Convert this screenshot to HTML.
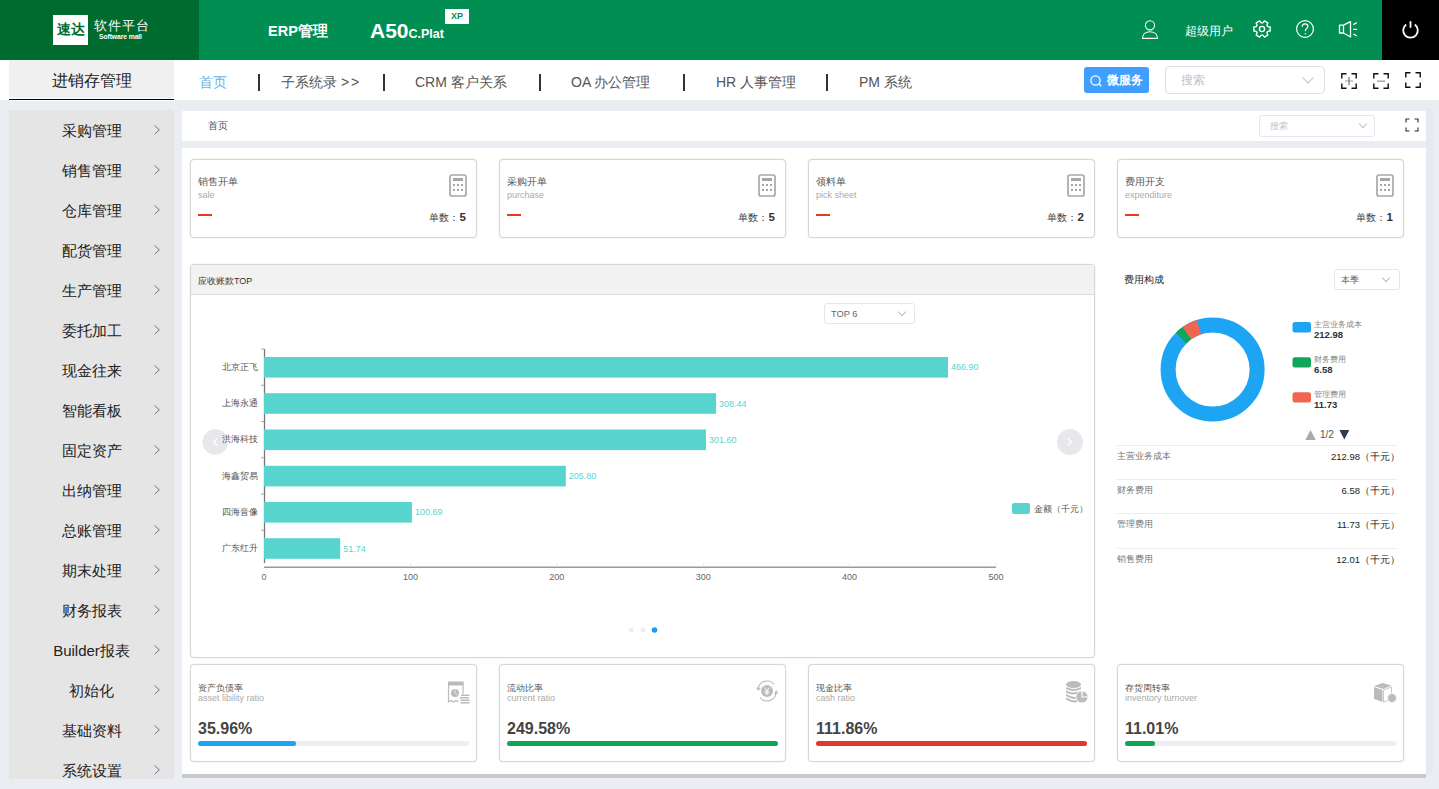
<!DOCTYPE html>
<html><head><meta charset="utf-8">
<style>
*{box-sizing:border-box;margin:0;padding:0}
html,body{width:1439px;height:789px;overflow:hidden;background:#eaedf1;font-family:"Liberation Sans",sans-serif;position:relative}
.a{position:absolute;white-space:nowrap}
#hdr{left:0;top:0;width:1439px;height:60px;background:#008e53}
#logo{left:0;top:0;width:199px;height:60px;background:#006b2f}
#nav2{left:0;top:60px;width:1439px;height:40px;background:#fff}
#side{left:9px;top:110px;width:165px;height:669px;background:#e5e5e5;overflow:hidden}
.si{position:absolute;left:0;width:165px;font-size:15px;color:#222;text-align:center;line-height:15px}
.si i{position:absolute;left:145px;top:2px;width:7px;height:10px;line-height:0}
.tab{font-size:14px;color:#555;top:75px;line-height:14px}
.sep{top:74px;width:2px;height:17px;background:#333}
.card{border:1px solid #d6d6d6;border-radius:4px;background:#fff;box-shadow:0 0 1.5px rgba(0,0,0,.14)}
.ct{font-size:10px;line-height:11px;color:#555}
.ct9{font-size:9px !important}
.cs{font-size:9px;line-height:11px;color:#aaa}
.lg{font-size:8px;line-height:10px;color:#888}
.lv{font-size:9.5px;line-height:11px;color:#333;font-weight:bold}
.tn{font-size:9px;line-height:11px;color:#777}
.tv{font-size:9.5px;line-height:11px;color:#222}
.bv{font-size:16px;line-height:19px;color:#444;font-weight:bold}
</style></head><body>
<div id="hdr" class="a"></div>
<div id="logo" class="a"></div>
<div class="a" style="left:53px;top:15px;width:35px;height:30px;background:#fff"></div>
<div class="a" style="left:57px;top:22px;font-size:13.8px;line-height:16px;font-weight:bold;color:#006b2f">速达</div>
<div class="a" style="left:94px;top:18.5px;font-size:12.7px;line-height:14px;color:#fff;letter-spacing:0.9px">软件平台</div>
<div class="a" style="left:99px;top:33px;font-size:6.8px;line-height:7px;color:#fff;font-weight:bold;letter-spacing:-0.1px">Software mall</div>

<div class="a" style="left:268px;top:23px;font-size:14.5px;line-height:16px;color:#fff;font-weight:bold">ERP管理</div>
<div class="a" style="left:370px;top:19.5px;font-size:21px;line-height:22px;color:#fff;font-weight:bold">A50<span style="font-size:12.5px">C.Plat</span></div>
<div class="a" style="left:445px;top:9px;width:24px;height:15px;background:#fff;color:#008e53;font-size:9px;font-weight:bold;text-align:center;line-height:15px">XP</div>

<!-- header right icons -->
<svg class="a" style="left:1140px;top:19px" width="20" height="22" viewBox="0 0 20 22" fill="none" stroke="#fff" stroke-width="1.1">
<circle cx="10" cy="6.3" r="4.6"/><path d="M2.5 19.4 C2.5 15 6 12.8 10 12.8 C14 12.8 17.5 15 17.5 19.4 Z"/></svg>
<div class="a" style="left:1185px;top:25px;font-size:12px;line-height:13px;color:#fff">超级用户</div>
<svg class="a" style="left:1252px;top:19.3px" width="20" height="20" viewBox="0 0 20 20" fill="none" stroke="#fff" stroke-width="1.4" stroke-linejoin="round"><path d="M12.32 1.93 L15.84 3.96 L14.89 6.18 L15.75 7.68 L18.15 7.97 L18.15 12.03 L15.75 12.32 L14.89 13.82 L15.84 16.04 L12.32 18.07 L10.86 16.14 L9.14 16.14 L7.68 18.07 L4.16 16.04 L5.11 13.82 L4.25 12.32 L1.85 12.03 L1.85 7.97 L4.25 7.68 L5.11 6.18 L4.16 3.96 L7.68 1.93 L9.14 3.86 L10.86 3.86Z"/><circle cx="10" cy="10" r="2.6"/></svg>
<svg class="a" style="left:1295px;top:19px" width="20" height="20" viewBox="0 0 20 20" fill="none" stroke="#fff" stroke-width="1.2">
<circle cx="10" cy="10" r="8.4"/><path d="M7.2 7.8 C7.2 5.9 8.5 4.9 10.1 4.9 C11.8 4.9 12.9 6 12.9 7.4 C12.9 9.3 10.3 9.7 10.3 12.2"/><circle cx="10.3" cy="14.7" r="0.7" fill="#fff" stroke="none"/></svg>
<svg class="a" style="left:1338px;top:20px" width="21" height="19" viewBox="0 0 21 19" fill="none" stroke="#fff" stroke-width="1.3" stroke-linejoin="round">
<path d="M1.5 5.2 H5.5 L12.5 1.6 V17 L5.5 13 H1.5 Z M5.5 5.2 V13"/><path d="M15.3 4.6 L18.8 2.6 M15.3 9.3 H19 M15.3 14 L18.8 16"/></svg>
<div class="a" style="left:1382px;top:0;width:57px;height:60px;background:#000"></div>
<svg class="a" style="left:1401px;top:20px" width="19" height="20" viewBox="0 0 19 20" fill="none" stroke="#fff" stroke-width="1.8">
<path d="M5.2 4.5 A7.3 7.3 0 1 0 13.8 4.5"/><path d="M9.5 1.2 V7.8"/></svg>

<!-- nav row 2 -->
<div id="nav2" class="a"></div>
<div class="a" style="left:9px;top:60px;width:165px;height:41px;background:#fff"></div><div class="a" style="left:9px;top:60px;width:165px;height:38px;background:#f0f0f0"></div><div class="a" style="left:9px;top:99px;width:165px;height:1px;background:#000"></div>
<div class="a" style="left:52px;top:73px;font-size:16px;line-height:16px;color:#222">进销存管理</div>
<div class="a tab" style="left:199px;color:#67b3ea">首页</div>
<div class="a sep" style="left:258px"></div>
<div class="a tab" style="left:281px">子系统录 &gt;<span style="margin-left:2px">&gt;</span></div>
<div class="a sep" style="left:383px"></div>
<div class="a tab" style="left:415px">CRM 客户关系</div>
<div class="a sep" style="left:539px"></div>
<div class="a tab" style="left:571px">OA 办公管理</div>
<div class="a sep" style="left:683px"></div>
<div class="a tab" style="left:716px">HR 人事管理</div>
<div class="a sep" style="left:826px"></div>
<div class="a tab" style="left:859px">PM 系统</div>

<div class="a" style="left:1084px;top:67px;width:65px;height:26px;background:#409eff;border-radius:3px"></div>
<svg class="a" style="left:1090px;top:75px" width="12" height="12" viewBox="0 0 12 12" fill="none" stroke="#fff" stroke-width="1.3"><circle cx="5.5" cy="5.5" r="4.6"/><path d="M9 9 L11.3 11.3"/></svg>
<div class="a" style="left:1107px;top:74px;font-size:12px;line-height:13px;color:#fff;font-weight:bold">微服务</div>
<div class="a" style="left:1165px;top:66px;width:160px;height:28px;border:1px solid #dcdfe6;border-radius:4px;background:#fff"></div>
<div class="a" style="left:1181px;top:74px;font-size:12px;line-height:13px;color:#c0c4cc">搜索</div>
<div class="a" style="left:1304px;top:74px;width:8px;height:8px;border-right:1px solid #c0c4cc;border-bottom:1px solid #c0c4cc;transform:rotate(45deg)"></div>


<svg class="a" style="left:1340px;top:72px" width="18" height="18" viewBox="0 0 18 18" fill="none" stroke="#111" stroke-width="1.4"><path d="M1.8 6.5V1.8H6.5M11.5 1.8H16.2V6.5M16.2 11.5V16.2H11.5M6.5 16.2H1.8V11.5"/><path d="M5 9H13" stroke="#aaa" stroke-width="1.2"/><path d="M9 5V13" stroke="#777" stroke-width="1.2"/></svg>
<svg class="a" style="left:1372px;top:72px" width="18" height="18" viewBox="0 0 18 18" fill="none" stroke="#111" stroke-width="1.4"><path d="M1.8 6.5V1.8H6.5M11.5 1.8H16.2V6.5M16.2 11.5V16.2H11.5M6.5 16.2H1.8V11.5"/><path d="M5 9.2H13" stroke="#aaa" stroke-width="1.5"/></svg>
<svg class="a" style="left:1404px;top:71px" width="18" height="18" viewBox="0 0 18 18" fill="none" stroke="#111" stroke-width="1.4"><path d="M1.8 6.5V1.8H6.5M11.5 1.8H16.2V6.5M16.2 11.5V16.2H11.5M6.5 16.2H1.8V11.5"/></svg>
<!-- sidebar -->
<div id="side" class="a">
<div class="si" style="top:13px">采购管理<i><svg width="7" height="10" viewBox="0 0 7 10"><path d="M0.6 0.5 L5.3 4.9 L0.6 9.3" fill="none" stroke="#5f6678" stroke-width="0.9"/></svg></i></div>
<div class="si" style="top:53px">销售管理<i><svg width="7" height="10" viewBox="0 0 7 10"><path d="M0.6 0.5 L5.3 4.9 L0.6 9.3" fill="none" stroke="#5f6678" stroke-width="0.9"/></svg></i></div>
<div class="si" style="top:93px">仓库管理<i><svg width="7" height="10" viewBox="0 0 7 10"><path d="M0.6 0.5 L5.3 4.9 L0.6 9.3" fill="none" stroke="#5f6678" stroke-width="0.9"/></svg></i></div>
<div class="si" style="top:133px">配货管理<i><svg width="7" height="10" viewBox="0 0 7 10"><path d="M0.6 0.5 L5.3 4.9 L0.6 9.3" fill="none" stroke="#5f6678" stroke-width="0.9"/></svg></i></div>
<div class="si" style="top:173px">生产管理<i><svg width="7" height="10" viewBox="0 0 7 10"><path d="M0.6 0.5 L5.3 4.9 L0.6 9.3" fill="none" stroke="#5f6678" stroke-width="0.9"/></svg></i></div>
<div class="si" style="top:213px">委托加工<i><svg width="7" height="10" viewBox="0 0 7 10"><path d="M0.6 0.5 L5.3 4.9 L0.6 9.3" fill="none" stroke="#5f6678" stroke-width="0.9"/></svg></i></div>
<div class="si" style="top:253px">现金往来<i><svg width="7" height="10" viewBox="0 0 7 10"><path d="M0.6 0.5 L5.3 4.9 L0.6 9.3" fill="none" stroke="#5f6678" stroke-width="0.9"/></svg></i></div>
<div class="si" style="top:293px">智能看板<i><svg width="7" height="10" viewBox="0 0 7 10"><path d="M0.6 0.5 L5.3 4.9 L0.6 9.3" fill="none" stroke="#5f6678" stroke-width="0.9"/></svg></i></div>
<div class="si" style="top:333px">固定资产<i><svg width="7" height="10" viewBox="0 0 7 10"><path d="M0.6 0.5 L5.3 4.9 L0.6 9.3" fill="none" stroke="#5f6678" stroke-width="0.9"/></svg></i></div>
<div class="si" style="top:373px">出纳管理<i><svg width="7" height="10" viewBox="0 0 7 10"><path d="M0.6 0.5 L5.3 4.9 L0.6 9.3" fill="none" stroke="#5f6678" stroke-width="0.9"/></svg></i></div>
<div class="si" style="top:413px">总账管理<i><svg width="7" height="10" viewBox="0 0 7 10"><path d="M0.6 0.5 L5.3 4.9 L0.6 9.3" fill="none" stroke="#5f6678" stroke-width="0.9"/></svg></i></div>
<div class="si" style="top:453px">期末处理<i><svg width="7" height="10" viewBox="0 0 7 10"><path d="M0.6 0.5 L5.3 4.9 L0.6 9.3" fill="none" stroke="#5f6678" stroke-width="0.9"/></svg></i></div>
<div class="si" style="top:493px">财务报表<i><svg width="7" height="10" viewBox="0 0 7 10"><path d="M0.6 0.5 L5.3 4.9 L0.6 9.3" fill="none" stroke="#5f6678" stroke-width="0.9"/></svg></i></div>
<div class="si" style="top:533px">Builder报表<i><svg width="7" height="10" viewBox="0 0 7 10"><path d="M0.6 0.5 L5.3 4.9 L0.6 9.3" fill="none" stroke="#5f6678" stroke-width="0.9"/></svg></i></div>
<div class="si" style="top:573px">初始化<i><svg width="7" height="10" viewBox="0 0 7 10"><path d="M0.6 0.5 L5.3 4.9 L0.6 9.3" fill="none" stroke="#5f6678" stroke-width="0.9"/></svg></i></div>
<div class="si" style="top:613px">基础资料<i><svg width="7" height="10" viewBox="0 0 7 10"><path d="M0.6 0.5 L5.3 4.9 L0.6 9.3" fill="none" stroke="#5f6678" stroke-width="0.9"/></svg></i></div>
<div class="si" style="top:653px">系统设置<i><svg width="7" height="10" viewBox="0 0 7 10"><path d="M0.6 0.5 L5.3 4.9 L0.6 9.3" fill="none" stroke="#5f6678" stroke-width="0.9"/></svg></i></div>
</div>


<!-- breadcrumb -->
<div class="a" style="left:182px;top:111px;width:1244px;height:30px;background:#fff"></div>
<div class="a" style="left:208px;top:120px;font-size:10px;line-height:11px;color:#555">首页</div>
<div class="a" style="left:1259px;top:115px;width:116px;height:22px;border:1px solid #e4e7ed;border-radius:3px;background:#fff"></div>
<div class="a" style="left:1270px;top:121px;font-size:9px;line-height:10px;color:#c0c4cc">搜索</div>
<div class="a" style="left:1360px;top:121px;width:6px;height:6px;border-right:1px solid #c0c4cc;border-bottom:1px solid #c0c4cc;transform:rotate(45deg)"></div>
<svg class="a" style="left:1405px;top:118px" width="14" height="14" viewBox="0 0 14 14" fill="none" stroke="#2a2a3a" stroke-width="1.1"><path d="M1 4.5V1H4.5M9.5 1H13V4.5M13 9.5V13H9.5M4.5 13H1V9.5"/></svg>

<!-- main white -->
<div class="a" style="left:182px;top:148px;width:1244px;height:626px;background:#fff"></div>
<div class="a" style="left:182px;top:774px;width:1244px;height:4px;background:#c9c9c9"></div>
<div class="a" style="left:1426px;top:108px;width:7px;height:666px;background:#e6e9ee"></div>
<div class="a card" style="left:190px;top:159px;width:287px;height:79px">
<div class="a ct" style="left:7px;top:16px">销售开单</div>
<div class="a cs" style="left:7px;top:30px">sale</div>
<div class="a" style="left:7px;top:54px;width:14px;height:2px;background:#e53a22"></div>
<svg class="a" style="left:258px;top:14px" width="18" height="23" viewBox="0 0 18 23"><rect x="1" y="1" width="16" height="21" rx="2" fill="none" stroke="#a8a8a8" stroke-width="1.7"/><rect x="4" y="4" width="10" height="3" fill="#a6a6a6"/><g fill="#a6a6a6"><rect x="4" y="10" width="2" height="2"/><rect x="8" y="10" width="2" height="2"/><rect x="12" y="10" width="2" height="2"/><rect x="4" y="15" width="2" height="2"/><rect x="8" y="15" width="2" height="2"/><rect x="12" y="15" width="2" height="2"/></g></svg>
<div class="a" style="right:10px;top:50.5px;font-size:10px;line-height:12px;color:#444">单数：<b style="font-size:11.5px;color:#333;margin-left:1px">5</b></div>
</div>
<div class="a card" style="left:499px;top:159px;width:287px;height:79px">
<div class="a ct" style="left:7px;top:16px">采购开单</div>
<div class="a cs" style="left:7px;top:30px">purchase</div>
<div class="a" style="left:7px;top:54px;width:14px;height:2px;background:#e53a22"></div>
<svg class="a" style="left:258px;top:14px" width="18" height="23" viewBox="0 0 18 23"><rect x="1" y="1" width="16" height="21" rx="2" fill="none" stroke="#a8a8a8" stroke-width="1.7"/><rect x="4" y="4" width="10" height="3" fill="#a6a6a6"/><g fill="#a6a6a6"><rect x="4" y="10" width="2" height="2"/><rect x="8" y="10" width="2" height="2"/><rect x="12" y="10" width="2" height="2"/><rect x="4" y="15" width="2" height="2"/><rect x="8" y="15" width="2" height="2"/><rect x="12" y="15" width="2" height="2"/></g></svg>
<div class="a" style="right:10px;top:50.5px;font-size:10px;line-height:12px;color:#444">单数：<b style="font-size:11.5px;color:#333;margin-left:1px">5</b></div>
</div>
<div class="a card" style="left:808px;top:159px;width:287px;height:79px">
<div class="a ct" style="left:7px;top:16px">领料单</div>
<div class="a cs" style="left:7px;top:30px">pick sheet</div>
<div class="a" style="left:7px;top:54px;width:14px;height:2px;background:#e53a22"></div>
<svg class="a" style="left:258px;top:14px" width="18" height="23" viewBox="0 0 18 23"><rect x="1" y="1" width="16" height="21" rx="2" fill="none" stroke="#a8a8a8" stroke-width="1.7"/><rect x="4" y="4" width="10" height="3" fill="#a6a6a6"/><g fill="#a6a6a6"><rect x="4" y="10" width="2" height="2"/><rect x="8" y="10" width="2" height="2"/><rect x="12" y="10" width="2" height="2"/><rect x="4" y="15" width="2" height="2"/><rect x="8" y="15" width="2" height="2"/><rect x="12" y="15" width="2" height="2"/></g></svg>
<div class="a" style="right:10px;top:50.5px;font-size:10px;line-height:12px;color:#444">单数：<b style="font-size:11.5px;color:#333;margin-left:1px">2</b></div>
</div>
<div class="a card" style="left:1117px;top:159px;width:287px;height:79px">
<div class="a ct" style="left:7px;top:16px">费用开支</div>
<div class="a cs" style="left:7px;top:30px">expenditure</div>
<div class="a" style="left:7px;top:54px;width:14px;height:2px;background:#e53a22"></div>
<svg class="a" style="left:258px;top:14px" width="18" height="23" viewBox="0 0 18 23"><rect x="1" y="1" width="16" height="21" rx="2" fill="none" stroke="#a8a8a8" stroke-width="1.7"/><rect x="4" y="4" width="10" height="3" fill="#a6a6a6"/><g fill="#a6a6a6"><rect x="4" y="10" width="2" height="2"/><rect x="8" y="10" width="2" height="2"/><rect x="12" y="10" width="2" height="2"/><rect x="4" y="15" width="2" height="2"/><rect x="8" y="15" width="2" height="2"/><rect x="12" y="15" width="2" height="2"/></g></svg>
<div class="a" style="right:10px;top:50.5px;font-size:10px;line-height:12px;color:#444">单数：<b style="font-size:11.5px;color:#333;margin-left:1px">1</b></div>
</div>

<div class="a" style="left:190px;top:264px;width:905px;height:394px;border:1px solid #d6d6d6;border-radius:4px;background:#fff;box-shadow:0 0 1.5px rgba(0,0,0,.14)"></div>
<div class="a" style="left:191px;top:265px;width:903px;height:30px;background:#f2f2f2;border-bottom:1px solid #ddd"></div>
<div class="a" style="left:198px;top:276px;font-size:9px;line-height:11px;color:#333">应收账款TOP</div>
<div class="a" style="left:824px;top:303px;width:91px;height:21px;border:1px solid #e4e7ed;border-radius:3px"></div>
<div class="a" style="left:831px;top:308.5px;font-size:9.3px;line-height:11px;color:#666">TOP 6</div>
<div class="a" style="left:899px;top:309px;width:6px;height:6px;border-right:1px solid #bbb;border-bottom:1px solid #bbb;transform:rotate(45deg)"></div>
<svg class="a" style="left:190px;top:295px" width="905" height="362" viewBox="190 295 905 362">
<circle cx="215.2" cy="442" r="12.8" fill="#e6e8eb"/>
<path d="M217 438.5 L213.5 442 L217 445.5" fill="none" stroke="#fff" stroke-width="1.4"/>
<line x1="264.5" y1="349" x2="264.5" y2="563" stroke="#777" stroke-width="1.3"/>
<line x1="264" y1="567.25" x2="996" y2="567.25" stroke="#999" stroke-width="1.5"/>
<rect x="264" y="357.0" width="684.0" height="20.6" fill="#58d4cf"/><text x="951.0" y="370.3" font-size="9" fill="#58d4cf">466.90</text><text x="258" y="369.8" font-size="9" fill="#555" text-anchor="end">北京正飞</text><rect x="264" y="393.2" width="452.1" height="20.6" fill="#58d4cf"/><text x="719.1" y="406.6" font-size="9" fill="#58d4cf">308.44</text><text x="258" y="406.1" font-size="9" fill="#555" text-anchor="end">上海永通</text><rect x="264" y="429.5" width="442.0" height="20.6" fill="#58d4cf"/><text x="709.0" y="442.8" font-size="9" fill="#58d4cf">301.60</text><text x="258" y="442.3" font-size="9" fill="#555" text-anchor="end">洪海科技</text><rect x="264" y="465.8" width="301.8" height="20.6" fill="#58d4cf"/><text x="568.8" y="479.1" font-size="9" fill="#58d4cf">205.80</text><text x="258" y="478.6" font-size="9" fill="#555" text-anchor="end">海鑫贸易</text><rect x="264" y="502.0" width="147.9" height="20.6" fill="#58d4cf"/><text x="414.9" y="515.3" font-size="9" fill="#58d4cf">100.69</text><text x="258" y="514.8" font-size="9" fill="#555" text-anchor="end">四海音像</text><rect x="264" y="538.2" width="76.2" height="20.6" fill="#58d4cf"/><text x="343.2" y="551.5" font-size="9" fill="#58d4cf">51.74</text><text x="258" y="551.0" font-size="9" fill="#555" text-anchor="end">广东红升</text><line x1="261" y1="349.0" x2="264" y2="349.0" stroke="#aaa"/><line x1="261" y1="385.2" x2="264" y2="385.2" stroke="#aaa"/><line x1="261" y1="421.5" x2="264" y2="421.5" stroke="#aaa"/><line x1="261" y1="457.8" x2="264" y2="457.8" stroke="#aaa"/><line x1="261" y1="494.0" x2="264" y2="494.0" stroke="#aaa"/><line x1="261" y1="530.2" x2="264" y2="530.2" stroke="#aaa"/><text x="264.0" y="580" font-size="9" fill="#666" text-anchor="middle">0</text><text x="410.4" y="580" font-size="9" fill="#666" text-anchor="middle">100</text><line x1="410.4" y1="563" x2="410.4" y2="566" stroke="#e5e5e5"/><text x="556.8" y="580" font-size="9" fill="#666" text-anchor="middle">200</text><line x1="556.8" y1="563" x2="556.8" y2="566" stroke="#e5e5e5"/><text x="703.2" y="580" font-size="9" fill="#666" text-anchor="middle">300</text><line x1="703.2" y1="563" x2="703.2" y2="566" stroke="#e5e5e5"/><text x="849.6" y="580" font-size="9" fill="#666" text-anchor="middle">400</text><line x1="849.6" y1="563" x2="849.6" y2="566" stroke="#e5e5e5"/><text x="996.0" y="580" font-size="9" fill="#666" text-anchor="middle">500</text><line x1="996.0" y1="563" x2="996.0" y2="566" stroke="#e5e5e5"/>
<rect x="1012" y="503" width="18" height="11" rx="2" fill="#58d4cf"/>
<text x="1034" y="511.6" font-size="8.6" fill="#555">金额（千元）</text>
<circle cx="1070" cy="442" r="13" fill="#e6e8eb"/>
<path d="M1068 438.5 L1071.5 442 L1068 445.5" fill="none" stroke="#fff" stroke-width="1.4"/>
<circle cx="631" cy="630" r="2.5" fill="#eee"/>
<circle cx="643" cy="630" r="2.5" fill="#eee"/>
<circle cx="654.5" cy="630" r="2.8" fill="#1d9bf0"/>
</svg>

<!-- right panel -->
<div class="a" style="left:1124px;top:274px;font-size:10.2px;line-height:12px;color:#222">费用构成</div>
<div class="a" style="left:1334px;top:269px;width:66px;height:21px;border:1px solid #e4e7ed;border-radius:3px"></div>
<div class="a" style="left:1341px;top:274.5px;font-size:9px;line-height:11px;color:#666">本季</div>
<div class="a" style="left:1383px;top:275px;width:6px;height:6px;border-right:1px solid #bbb;border-bottom:1px solid #bbb;transform:rotate(45deg)"></div>
<svg class="a" style="left:1150px;top:305px" width="130" height="130" viewBox="0 0 130 130">
<circle cx="62.6" cy="64.6" r="44.5" fill="none" stroke="#1da4f3" stroke-width="15"/>
<path d="M25.89 27.77 A52 52 0 0 1 32.63 22.11 L41.27 34.37 A37 37 0 0 0 36.48 38.39Z" fill="#0fa55a"/>
<path d="M32.63 22.11 A52 52 0 0 1 46.70 15.09 L51.29 29.37 A37 37 0 0 0 41.27 34.37Z" fill="#f2654e"/>
</svg>
<svg class="a" style="left:1290px;top:318px" width="80" height="125" viewBox="1290 318 80 125">
<rect x="1292.5" y="322" width="18.5" height="10.5" rx="2.5" fill="#1da4f3"/>
<rect x="1292.5" y="357.3" width="18.5" height="10.2" rx="2.5" fill="#0fa55a"/>
<rect x="1292.5" y="392.3" width="18.5" height="10.2" rx="2.5" fill="#f2654e"/>
<path d="M1305.3 440 L1310.5 430 L1315.8 440Z" fill="#aaa"/>
<path d="M1339.4 430 L1349.3 430 L1344.35 439.5Z" fill="#2d3d4d"/>
</svg>
<div class="a lg" style="left:1314px;top:320px">主营业务成本</div>
<div class="a lv" style="left:1314px;top:328.5px">212.98</div>
<div class="a lg" style="left:1314px;top:355px">财务费用</div>
<div class="a lv" style="left:1314px;top:363.5px">6.58</div>
<div class="a lg" style="left:1314px;top:390px">管理费用</div>
<div class="a lv" style="left:1314px;top:398.5px">11.73</div>
<div class="a" style="left:1320px;top:429px;font-size:10px;line-height:12px;color:#555">1/2</div>
<div class="a" style="left:1117px;top:445px;width:280px;height:1px;background:#ebebeb"></div><div class="a tn" style="left:1117px;top:451px">主营业务成本</div><div class="a tv" style="right:39px;top:451px">212.98（千元）</div><div class="a" style="left:1117px;top:479px;width:280px;height:1px;background:#ebebeb"></div><div class="a tn" style="left:1117px;top:485px">财务费用</div><div class="a tv" style="right:39px;top:485px">6.58（千元）</div><div class="a" style="left:1117px;top:513px;width:280px;height:1px;background:#ebebeb"></div><div class="a tn" style="left:1117px;top:519px">管理费用</div><div class="a tv" style="right:39px;top:519px">11.73（千元）</div><div class="a" style="left:1117px;top:548px;width:280px;height:1px;background:#ebebeb"></div><div class="a tn" style="left:1117px;top:554px">销售费用</div><div class="a tv" style="right:39px;top:554px">12.01（千元）</div>
<div class="a card" style="left:190px;top:664px;width:287px;height:98px">
<div class="a ct ct9" style="left:7px;top:18px">资产负债率</div>
<div class="a cs" style="left:7px;top:28px">asset libility ratio</div>
<div class="a bv" style="left:7px;top:54px">35.96%</div>
<div class="a" style="left:7px;top:76px;width:271px;height:5px;border-radius:3px;background:#ebeef3"></div>
<div class="a" style="left:7px;top:76px;width:97.5px;height:5px;border-radius:3px;background:#1da4f3"></div>
<svg class="a" style="left:255.5px;top:15.5px" width="24" height="24" viewBox="0 0 24 24"><path d="M1 1H16V13" fill="none" stroke="#bbb" stroke-width="1.2"/><rect x="1" y="1" width="15.5" height="3.5" fill="#bbb"/><path d="M1.5 4V21 L4 19.5 L6.5 21 L9 19.5 L11.5 21" fill="none" stroke="#bbb" stroke-width="1.2"/><circle cx="8" cy="12" r="4" fill="#bbb"/><path d="M8 8.5V12L10.5 14" stroke="#fff" stroke-width="0.6" fill="none"/><g fill="#bbb"><rect x="14" y="13.5" width="8.5" height="1.5"/><rect x="13" y="16" width="9" height="1.5"/><rect x="13.5" y="18.5" width="9" height="1.5"/><rect x="13.5" y="21" width="9" height="1.5"/></g></svg>
</div>
<div class="a card" style="left:499px;top:664px;width:287px;height:98px">
<div class="a ct ct9" style="left:7px;top:18px">流动比率</div>
<div class="a cs" style="left:7px;top:28px">current ratio</div>
<div class="a bv" style="left:7px;top:54px">249.58%</div>
<div class="a" style="left:7px;top:76px;width:271px;height:5px;border-radius:3px;background:#ebeef3"></div>
<div class="a" style="left:7px;top:76px;width:271.0px;height:5px;border-radius:3px;background:#0fa55a"></div>
<svg class="a" style="left:255px;top:15px" width="24" height="22" viewBox="0 0 24 22"><path d="M19 4.5 A9 9 0 0 0 3 9" fill="none" stroke="#bbb" stroke-width="1.2"/><path d="M1 7.5 L3.3 11 L5.6 7.8Z" fill="#bbb"/><path d="M5 17.5 A9 9 0 0 0 21 13" fill="none" stroke="#bbb" stroke-width="1.2"/><path d="M19 13.5 L21.3 10 L23.3 13.8Z" fill="#bbb"/><circle cx="12" cy="11" r="6" fill="#bbb"/><path d="M9.5 7.5 L12 10.5 L14.5 7.5 M12 10.5V15 M9.8 11.2H14.2 M9.8 13H14.2" stroke="#fff" stroke-width="1" fill="none"/></svg>
</div>
<div class="a card" style="left:808px;top:664px;width:287px;height:98px">
<div class="a ct ct9" style="left:7px;top:18px">现金比率</div>
<div class="a cs" style="left:7px;top:28px">cash ratio</div>
<div class="a bv" style="left:7px;top:54px">111.86%</div>
<div class="a" style="left:7px;top:76px;width:271px;height:5px;border-radius:3px;background:#ebeef3"></div>
<div class="a" style="left:7px;top:76px;width:271.0px;height:5px;border-radius:3px;background:#e0392b"></div>
<svg class="a" style="left:254.5px;top:15px" width="24" height="24" viewBox="0 0 24 24"><g fill="#bbb"><ellipse cx="9.5" cy="4.5" rx="7.5" ry="3.5"/><path d="M2 7 Q9.5 11 17 7 V9 Q9.5 13 2 9Z"/><path d="M2 10.5 Q9.5 14.5 17 10.5 V12.5 Q9.5 16.5 2 12.5Z"/><path d="M2 14 Q9.5 18 13 16.5 V18.5 Q9.5 20 2 16Z"/><path d="M2 17.5 Q9.5 21.5 13 20 V22 Q9.5 23.5 2 19.5Z"/></g><circle cx="18" cy="17" r="6" fill="#bbb" stroke="#fff" stroke-width="0.8"/><path d="M18 11V17H24" fill="none" stroke="#fff" stroke-width="1.2"/></svg>
</div>
<div class="a card" style="left:1117px;top:664px;width:287px;height:98px">
<div class="a ct ct9" style="left:7px;top:18px">存货周转率</div>
<div class="a cs" style="left:7px;top:28px">inventory turnover</div>
<div class="a bv" style="left:7px;top:54px">11.01%</div>
<div class="a" style="left:7px;top:76px;width:271px;height:5px;border-radius:3px;background:#ebeef3"></div>
<div class="a" style="left:7px;top:76px;width:29.8px;height:5px;border-radius:3px;background:#0fa55a"></div>
<svg class="a" style="left:255px;top:16.5px" width="24" height="22" viewBox="0 0 24 22"><path d="M1 4 L9.5 1 L18.5 3.5 L10 7Z" fill="#bbb"/><path d="M1 5 L9.5 8 V20 L1 17Z" fill="#bbb"/><path d="M10.5 8 L18.5 5 V13 M10.5 8 V20 L15 18.5" fill="none" stroke="#ccc" stroke-width="1"/><circle cx="19" cy="16" r="4.5" fill="#bbb" stroke="#fff" stroke-width="0.8"/></svg>
</div>
<!-- CONTENT -->
</body></html>
